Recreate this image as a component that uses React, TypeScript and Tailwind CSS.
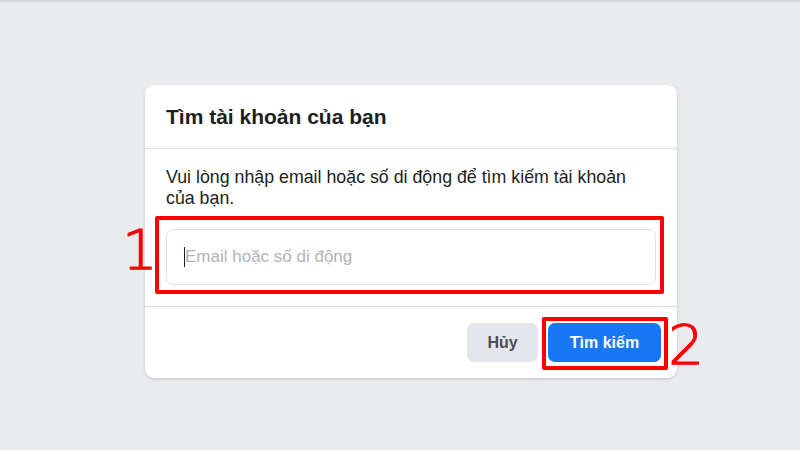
export default function App() {
  return (
    <div className="relative h-[450px] w-[800px] overflow-hidden bg-[#e9ebee] font-['Liberation_Sans',Arial,sans-serif]">
      <div className="h-[3px] bg-gradient-to-b from-[#cfd0d4] to-[#e4e5e9]" />
      <div className="ml-[145px] mt-[82px] w-[532px] rounded-[9px] bg-white shadow-[0_1px_3px_rgba(0,0,0,0.18)]">
        <div className="flex h-[64px] items-center border-b border-[#dadde1] px-[21px]">
          <h2 className="text-[21px] font-bold text-[#1c1e21]">Tìm tài khoản của bạn</h2>
        </div>

        <div className="px-[21px] pb-[21px] pt-[18px]">
          <p className="text-[17.8px] leading-[21px] text-[#1c1e21]">
            Vui lòng nhập email hoặc số di động để tìm kiếm tài khoản của bạn.
          </p>
          <div className="relative mt-[20px]">
            <div className="flex h-[56px] items-center rounded-[7px] border border-[#dddfe2] px-[17px]">
              <span className="h-[20px] w-px bg-[#1c1e21]" />
              <span className="text-[17px] text-[#b0b3b8]">Email hoặc số di động</span>
            </div>
            <div className="pointer-events-none absolute -bottom-[9px] -left-[11px] -right-[8px] -top-[13px] rounded-[2px] border-[4px] border-[#f00]" />
            <span className="absolute -left-[44px] -top-[7px] font-['DejaVu_Sans',sans-serif] text-[56px] font-extralight leading-none text-[#f00] [-webkit-text-stroke:1.2px_#f00]">
              1
            </span>
          </div>
        </div>

        <div className="flex justify-end gap-[10px] border-t border-[#dadde1] px-[16px] py-[16px]">
          <button className="h-[39px] w-[71px] rounded-[7px] bg-[#e4e6eb] text-[16px] font-bold text-[#4b4f56]">
            Hủy
          </button>
          <div className="relative">
            <button className="h-[39px] w-[113px] rounded-[7px] bg-[#1877f2] text-[16px] font-bold text-white">
              Tìm kiếm
            </button>
            <div className="pointer-events-none absolute -bottom-[8px] -left-[6px] -right-[7px] -top-[6px] rounded-[2px] border-[4px] border-[#f00]" />
            <span className="absolute -right-[43px] -top-[6px] font-['DejaVu_Sans',sans-serif] text-[56px] font-extralight leading-none text-[#f00] [-webkit-text-stroke:1.2px_#f00]">
              2
            </span>
          </div>
        </div>
      </div>
    </div>
  );
}
